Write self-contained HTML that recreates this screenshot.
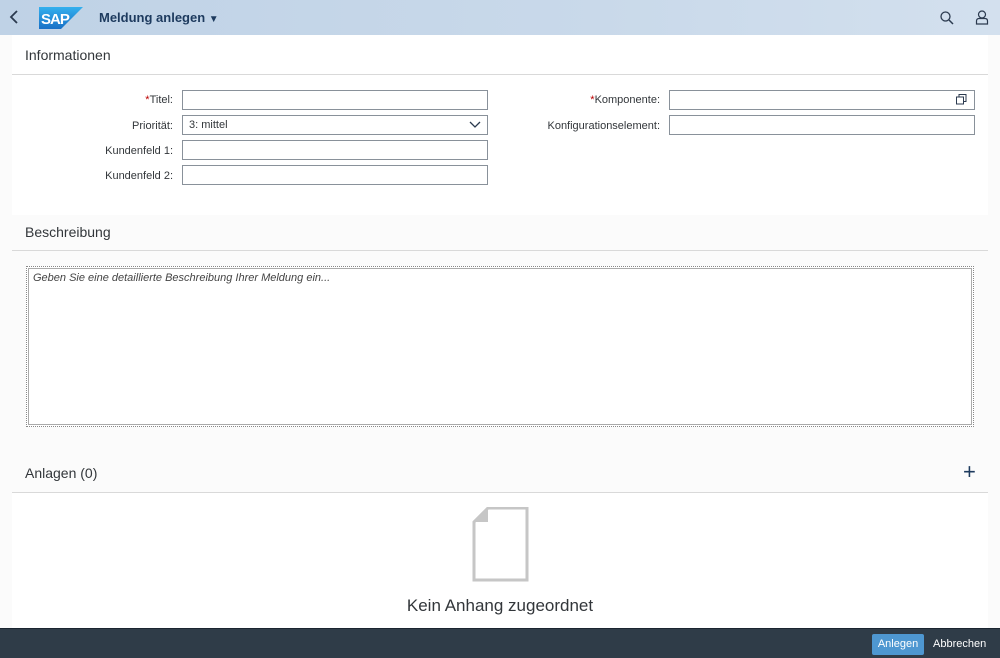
<!DOCTYPE html>
<html><head><style>
body{margin:0;width:1000px;height:657px;overflow:hidden;background:#fbfbfb;font-family:"Liberation Sans",sans-serif;position:relative;color:#32363a}
.hdr{position:absolute;left:0;top:0;width:1000px;height:35px;background:linear-gradient(90deg,#bfd2e6,#c9d9ea 60%,#d3e0ee)}
.lbl{position:absolute;font-size:11px;text-align:right;width:160px}
.inp{position:absolute;height:20px;border:1px solid #89919a;background:#fff;box-sizing:border-box;font-size:11px;padding:3px 6px}
.sec{position:absolute;left:25px;font-size:14px}
.line{position:absolute;left:12px;width:976px;height:1px;background:#d9d9d9}
</style></head><body>
<div class="hdr">
<svg style="position:absolute;left:9px;top:10px" width="10" height="14"><path d="M8 1L2 7L8 13" stroke="#2b3a4f" stroke-width="1.8" fill="none"/></svg>
<svg style="position:absolute;left:39px;top:7px" width="44" height="22"><defs><linearGradient id="g" x1="0" y1="0" x2="0" y2="1"><stop offset="0" stop-color="#34b0ee"/><stop offset="1" stop-color="#1870c6"/></linearGradient></defs><path d="M0 0H44L22 22H0Z" fill="url(#g)"/><text x="2" y="17" font-family="Liberation Sans" font-weight="bold" font-size="15" fill="#fff" letter-spacing="-1">SAP</text></svg>
<div style="position:absolute;left:99px;top:10px;font-size:13px;font-weight:bold;color:#1d3a5e">Meldung anlegen <span style="font-size:10px">▼</span></div>
<svg style="position:absolute;left:940px;top:11px" width="14" height="14"><circle cx="5.5" cy="5.5" r="4.5" stroke="#2b3a4f" stroke-width="1.3" fill="none"/><path d="M9 9L13 13" stroke="#2b3a4f" stroke-width="1.5"/></svg>
<svg style="position:absolute;left:975px;top:10px" width="14" height="15"><circle cx="7" cy="4.5" r="3.5" stroke="#2b3a4f" stroke-width="1.2" fill="none"/><path d="M1.5 14V11Q1.5 8.5 4 8.5H10Q12.5 8.5 12.5 11V14Z" stroke="#2b3a4f" stroke-width="1.2" fill="none"/></svg>
</div>
<div style="position:absolute;left:12px;top:35px;width:976px;height:180px;background:#fff"></div>
<div style="position:absolute;left:12px;top:493px;width:976px;height:135px;background:#fff"></div>
<div class="sec" style="top:47px">Informationen</div>
<div class="line" style="top:74px"></div>
<div class="lbl" style="left:13px;top:94px"><span style="color:#b00">*</span>Titel:</div>
<div class="inp" style="left:182px;top:90px;width:306px"></div>
<div class="lbl" style="left:13px;top:120px">Priorität:</div>
<div class="inp" style="left:182px;top:115px;width:306px">3: mittel<svg style="position:absolute;right:6px;top:5px" width="12" height="8"><path d="M1 1L6 6L11 1" stroke="#2b3a4f" stroke-width="1.3" fill="none"/></svg></div>
<div class="lbl" style="left:13px;top:145px">Kundenfeld 1:</div>
<div class="inp" style="left:182px;top:140px;width:306px"></div>
<div class="lbl" style="left:13px;top:170px">Kundenfeld 2:</div>
<div class="inp" style="left:182px;top:165px;width:306px"></div>
<div class="lbl" style="left:500px;top:94px"><span style="color:#b00">*</span>Komponente:</div>
<div class="inp" style="left:669px;top:90px;width:306px"><svg style="position:absolute;right:7px;top:3px" width="11" height="11"><rect x="3" y="0.5" width="7" height="7" stroke="#2b3a4f" fill="none"/><rect x="0.5" y="3" width="7" height="7" stroke="#2b3a4f" fill="#fff"/></svg></div>
<div class="lbl" style="left:500px;top:120px">Konfigurationselement:</div>
<div class="inp" style="left:669px;top:115px;width:306px"></div>
<div class="sec" style="top:224px">Beschreibung</div>
<div class="line" style="top:250px"></div>
<div style="position:absolute;left:26px;top:266px;width:948px;height:161px;border:1px dotted #888;outline:1px solid #aaa;outline-offset:-3px;background:#fff;box-sizing:border-box;font-size:11px;font-style:italic;padding:5px 6px;color:#444">Geben Sie eine detaillierte Beschreibung Ihrer Meldung ein...</div>
<div class="sec" style="top:465px">Anlagen (0)</div>
<div style="position:absolute;left:963px;top:459px;font-size:22px;color:#1d3a5e">+</div>
<div class="line" style="top:492px"></div>
<svg style="position:absolute;left:472px;top:507px" width="57" height="75"><path d="M16 1H55V73H2V15Z" fill="none" stroke="#c6c6c6" stroke-width="3"/><path d="M2 15H16V1" fill="#c6c6c6"/></svg>
<div style="position:absolute;left:0;width:1000px;text-align:center;top:596px;font-size:17px">Kein Anhang zugeordnet</div>
<div style="position:absolute;left:0;top:628px;width:1000px;height:29px;background:#2f3c48;border-top:1px solid #1b2530"></div>
<div style="position:absolute;left:872px;top:634px;width:52px;height:21px;background:#4e97d1;border-radius:2px;color:#fff;font-size:11px;text-align:center;line-height:21px">Anlegen</div>
<div style="position:absolute;left:933px;top:634px;color:#fff;font-size:11px;line-height:21px">Abbrechen</div>
</body></html>
